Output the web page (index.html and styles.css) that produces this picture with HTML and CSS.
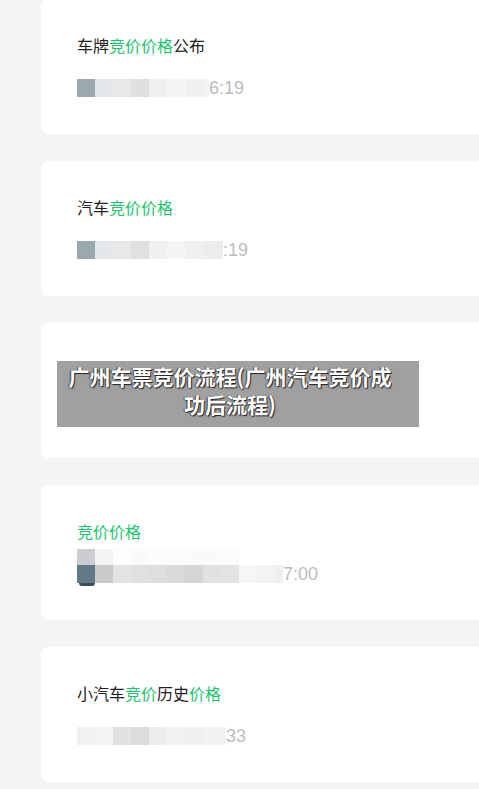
FILE: index.html
```html
<!DOCTYPE html>
<html lang="zh-CN">
<head>
  <meta charset="UTF-8" />
  <title>竞价价格</title>
  <link rel="stylesheet" href="styles.css">
</head>
<body>

  <div class="list">

    <!-- 文章卡片 -->
    <div class="card">
      <p class="title">车牌<em>竞价价格</em>公布</p>
      <p class="date"><span class="mosaic m1"></span>6:19</p>
    </div>

    <div class="card">
      <p class="title">汽车<em>竞价价格</em></p>
      <p class="date"><span class="mosaic m2"></span>:19</p>
    </div>

    <!-- 带封面图的卡片 -->
    <div class="card">
      <div class="cover">广州车票竞价流程(广州汽车竞价成功后流程)</div>
    </div>

    <div class="card">
      <p class="title"><em>竞价价格</em></p>
      <p class="date"><span class="mosaic m4"></span>7:00</p>
    </div>

    <div class="card">
      <p class="title">小汽车<em>竞价</em>历史<em>价格</em></p>
      <p class="date"><span class="mosaic m5"></span>33</p>
    </div>

  </div>

</body>
</html>
```

FILE: styles.css
```css
/* 页面底色 */
body {
  margin: 0;
  background: #f4f5f7;
  font-family: "Noto Sans CJK SC", "Noto Sans", sans-serif;
  overflow-x: hidden;
}

.list {
  display: flex;
  flex-direction: column;
  gap: 27px;
  margin-top: -1px;
  padding-left: 41px;
}

.card {
  box-sizing: border-box;
  width: 470px;
  height: 135px;
  padding: 35px 36px 0;
  background: #fff;
  border-radius: 8px;
}

.title {
  margin: 0;
  font-size: 16px;
  line-height: 22px;
  color: #222;
}

.title em {
  font-style: normal;
  color: #1ac46c;
}

.date {
  display: flex;
  align-items: center;
  margin: 23px 0 0;
  height: 18px;
  font-family: "Liberation Sans", Arial, sans-serif;
  font-size: 18px;
  line-height: 18px;
  color: #bcbcbc;
}

/* 马赛克遮挡的日期 */
.mosaic {
  position: relative;
  display: block;
  height: 18px;
  flex-shrink: 0;
}

.m1 {
  width: 132px;
  background: linear-gradient(to right,
    #9ba9b1 0 18px, #e4e7e9 18px 36px, #e8e8e8 36px 54px, #dfdfdf 54px 72px,
    #efefef 72px 90px, #f5f5f4 90px 108px, #f0f0f2 108px 126px, #f3f3f3 126px);
}

.m2 {
  width: 146px;
  background: linear-gradient(to right,
    #9aa8b0 0 18px, #e4e8ea 18px 36px, #e8e8e8 36px 54px, #e0e0e0 54px 72px,
    #f0f0f0 72px 90px, #f5f5f3 90px 108px, #f0f0f2 108px 126px, #ececec 126px);
}

.m4 {
  width: 206px;
  background: linear-gradient(to right,
    #627a86 0 18px, #c9cacc 18px 36px, #e3e3e1 36px 54px, #e0e0e0 54px 72px,
    #dedede 72px 90px, #d9d9d9 90px 108px, #d5d5d5 108px 126px, #e1e1df 126px 144px,
    #e3e3e5 144px 162px, #f6f6f6 162px 180px, #f3f3f2 180px 198px, #efefef 198px);
}

/* 上面一行浅色马赛克 */
.m4::before {
  content: "";
  position: absolute;
  left: 0;
  bottom: 18px;
  width: 162px;
  height: 16px;
  background: linear-gradient(to right,
    #cbcdd1 0 18px, #f3f4f3 18px 36px, #fdfdfd 36px 54px, #fafafa 54px 72px,
    #fcfcfc 72px 108px, #fafafa 108px 144px, #fbfbfb 144px);
}

.m4::after {
  content: "";
  position: absolute;
  left: 2px;
  top: 18px;
  width: 16px;
  height: 3px;
  border-radius: 0 0 3px 3px;
  background: #3c4a52;
}

.m5 {
  width: 149px;
  background: linear-gradient(to right,
    #f1f1f1 0 18px, #f3f3f3 18px 36px, #e2e2e2 36px 54px, #dcdcdc 54px 72px,
    #ececec 72px 90px, #f2f2f2 90px 108px, #f0f0f0 108px 126px, #f2f2f2 126px);
}

/* 封面图 */
.cover {
  box-sizing: border-box;
  width: 362px;
  height: 66px;
  margin: 3px 0 0 -20px;
  padding: 1px 22px 0 6px;
  background: #a0a0a0;
  color: #fff;
  font-size: 21px;
  font-weight: bold;
  line-height: 28px;
  text-align: center;
  text-shadow: 1px 1px 1px #222, -1px 0 1px #444;
}
```
